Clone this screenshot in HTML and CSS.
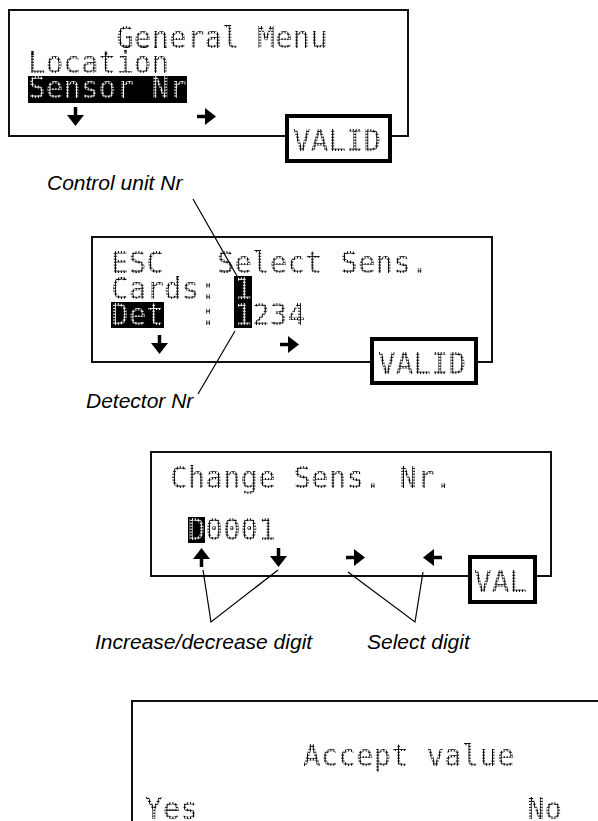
FILE: index.html
```html
<!DOCTYPE html>
<html>
<head>
<meta charset="utf-8">
<link rel="stylesheet" href="styles.css">
</head>
<body>
<div class="page">
  <div class="lcd lcd1">
    <div class="txt"><span class="d">     General Menu
Location</span>
<span class="hi"><span class="d">Sensor Nr</span></span></div>
    <div class="arrows">
      <svg class="ar" viewBox="0 0 19 19"><rect x="7.75" y="0" width="3.5" height="9"/><polygon points="1,8 18,8 9.5,19"/></svg>
      <svg class="ar" viewBox="0 0 19 19"><rect x="0" y="7.75" width="9" height="3.5"/><polygon points="8,1 8,18 19,9.5"/></svg>
    </div>
    <div class="btn btn1"><span class="d">VALID</span></div>
  </div>

  <p class="note note-ctrl">Control unit Nr</p>

  <div class="lcd lcd2">
    <div class="txt"><span class="d">ESC   Select Sens.
Cards: </span><span class="hi"><span class="d">1</span></span>
<span class="hi"><span class="d">Det</span></span><span class="d">  : </span><span class="hi"><span class="d">1</span></span><span class="d">234</span></div>
    <div class="arrows">
      <svg class="ar" viewBox="0 0 19 19"><rect x="7.75" y="0" width="3.5" height="9"/><polygon points="1,8 18,8 9.5,19"/></svg>
      <svg class="ar" viewBox="0 0 19 19"><rect x="0" y="7.75" width="9" height="3.5"/><polygon points="8,1 8,18 19,9.5"/></svg>
    </div>
    <div class="btn btn2"><span class="d">VALID</span></div>
  </div>

  <p class="note note-det">Detector Nr</p>

  <div class="lcd lcd3">
    <div class="txt"><span class="d">Change Sens. Nr.

 </span><span class="hi"><span class="d">D</span></span><span class="d">0001</span></div>
    <div class="arrows">
      <svg class="ar" viewBox="0 0 19 19"><rect x="7.75" y="10" width="3.5" height="9"/><polygon points="9.5,0 18,11 1,11"/></svg>
      <svg class="ar" viewBox="0 0 19 19"><rect x="7.75" y="0" width="3.5" height="9"/><polygon points="1,8 18,8 9.5,19"/></svg>
      <svg class="ar" viewBox="0 0 19 19"><rect x="0" y="7.75" width="9" height="3.5"/><polygon points="8,1 8,18 19,9.5"/></svg>
      <svg class="ar" viewBox="0 0 19 19"><rect x="10" y="7.75" width="9" height="3.5"/><polygon points="11,1 11,18 0,9.5"/></svg>
    </div>
    <div class="btn btn3"><span class="d">VAL</span></div>
  </div>

  <div class="notes">
    <p class="note note-inc">Increase/decrease digit</p>
    <p class="note note-sel">Select digit</p>
  </div>

  <div class="lcd lcd4">
    <div class="txt">
      <div class="acc"><span class="d">Accept value</span></div>
      <div class="yn"><span class="d">Yes</span><span class="d no">No</span></div>
    </div>
  </div>

  <svg class="leaders" width="598" height="821" viewBox="0 0 598 821">
    <path d="M193 199 L237 276"/>
    <path d="M235 331 L198 394"/>
    <path d="M203 570 L211 622 L278 570"/>
    <path d="M348 572 L415 622 L423 572"/>
  </svg>
</div>
</body>
</html>
```

FILE: styles.css
```css
* { box-sizing: border-box; }

body {
  margin: 0;
  background: #fff;
}

.page {
  position: relative;
  display: flow-root;
  width: 598px;
  height: 821px;
  overflow: hidden;
  font-family: "DejaVu Sans Mono", "Liberation Mono", monospace;
}

.lcd {
  position: relative;
  border: 2px solid #111;
  background: #fff;
  padding-left: 18px;
}

.txt {
  white-space: pre;
  font-size: 29.3px;
  line-height: 26px;
  color: #000;
}

/* dot-matrix texture on LCD characters */
.d {
  -webkit-mask-image: radial-gradient(circle at 50% 50%, #000 0, #000 1.05px, transparent 1.35px);
  -webkit-mask-size: 2.94px 2.94px;
  mask-image: radial-gradient(circle at 50% 50%, #000 0, #000 1.05px, transparent 1.35px);
  mask-size: 2.94px 2.94px;
}

.hi {
  display: inline-block;
  vertical-align: top;
  background: #000;
  color: #fff;
}

.lcd1 {
  margin: 9px 0 0 8px;
  width: 401px;
  height: 128px;
  padding-top: 15px;
}
.lcd1 .txt { line-height: 25px; }
.lcd1 .hi { padding-bottom: 2px; }

.lcd2 {
  margin: 41px 0 0 91px;
  width: 402px;
  height: 127px;
  padding-top: 12px;
}

.lcd3 {
  margin: 38px 0 0 150px;
  width: 402px;
  height: 126px;
  padding-top: 12px;
}

.lcd4 {
  margin: 46px 0 0 131px;
  width: 520px;
  height: 200px;
  padding-top: 41px;
  padding-left: 12px;
}
.lcd4 .txt { white-space: normal; }
.acc { padding-left: 158px; white-space: pre; }
.yn { margin-top: 28px; display: flex; line-height: 24px; }
.no { margin-left: 329px; }

.arrows {
  display: flex;
  height: 19px;
}
.ar {
  width: 19px;
  height: 19px;
  fill: #000;
  flex: none;
}
.lcd1 .arrows { margin-top: 4px; padding-left: 38px; gap: 112px; }
.lcd2 .arrows { margin-top: 7px; padding-left: 39px; gap: 111px; }
.lcd3 .arrows { margin-top: 5px; padding-left: 22px; gap: 58px; }

.btn {
  position: absolute;
  background: #fff;
  border: 4px solid #000;
  font-size: 29.3px;
  line-height: 26px;
  padding: 10px 0 0 4px;
  white-space: pre;
  color: #000;
}
.btn1 { right: 15px; bottom: -28px; width: 107px; height: 49px; }
.btn2 { right: 13px; bottom: -24px; width: 108px; height: 48px; }
.btn3 { right: 13px; bottom: -29px; width: 69px; height: 49px; padding-left: 2px; }

.note {
  margin: 0;
  font-family: "Liberation Sans", Arial, sans-serif;
  font-style: italic;
  font-size: 21px;
  line-height: 24px;
  color: #000;
  white-space: nowrap;
}
.note-ctrl { margin: 34px 0 0 47px; }
.note-det { margin: 26px 0 0 86px; }

.notes {
  display: flex;
  margin-top: 53px;
}
.note-inc { margin-left: 95px; width: 272px; }

.leaders {
  position: absolute;
  top: 0;
  left: 0;
  pointer-events: none;
  fill: none;
  stroke: #000;
  stroke-width: 1.2;
}
```
